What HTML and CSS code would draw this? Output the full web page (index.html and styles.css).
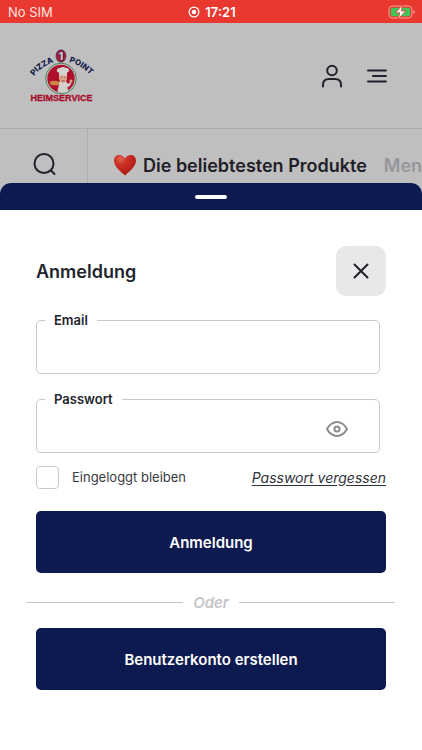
FILE: index.html
```html
<!DOCTYPE html>
<html lang="de">
<head>
<meta charset="utf-8">
<meta name="viewport" content="width=device-width, initial-scale=1">
<title>Pizza Point – Anmeldung</title>
<link rel="stylesheet" href="styles.css">
</head>
<body>
<div class="status">
  <span class="carrier">No SIM</span>
  <span class="clock">
    <svg width="12" height="12" viewBox="0 0 12 12" aria-hidden="true"><circle cx="6" cy="6" r="4.9" fill="none" stroke="#fff" stroke-width="1.2"/><circle cx="6" cy="6" r="2.3" fill="#fff"/></svg>
    17:21
  </span>
  <svg class="battery" width="28" height="16" viewBox="0 0 28 16" aria-hidden="true">
    <rect x="1" y="2" width="23" height="12" rx="3.5" fill="none" stroke="#f6a49d"/>
    <rect x="2.8" y="3.8" width="19.4" height="8.4" rx="1.8" fill="#3fc558"/>
    <path d="M25.5 6v4q1.4-.5 1.4-2t-1.4-2z" fill="#f6a49d"/>
    <path d="M14.5.8 7.6 8.8h4.2l-1.6 6.4 7.4-8.2h-4.3z" fill="#fff" stroke="#e8382f" stroke-width=".8"/>
  </svg>
</div>

<header class="top">
  <a class="logo" href="#" aria-label="Pizza Point Heimservice">
    <svg width="70" height="56" viewBox="0 0 70 56">
      <path id="arc-left" d="M7 28Q14 18 30 13" fill="none"/>
      <path id="arc-right" d="M42 14Q54 17 65 29" fill="none"/>
      <text class="logo-arc"><textPath href="#arc-left">PIZZA</textPath></text>
      <text class="logo-arc"><textPath href="#arc-right">POINT</textPath></text>
      <ellipse cx="34" cy="8" rx="5" ry="6.2" fill="#a51c37" stroke="#393550" stroke-width=".7"/>
      <text class="logo-one" x="34" y="12">1</text>
      <circle cx="34" cy="30.5" r="15.3" fill="#c7cbc5" stroke="#397752" stroke-width=".9"/>
      <circle cx="34" cy="30.5" r="13.7" fill="#ad0f2c"/>
      <path d="M30.500 43.500 32 36l-3 1.500-1-1.500 5-2.500h6l2.500 2.500 1.500-2 1.500 1-2.500 4-1.500-.5.5 5q-5 2-10.500 0z" fill="#d3d0ce"/>
      <path d="M32 27h8v4q-1 4-4 4t-4-4z" fill="#d8a78b"/>
      <path d="M32 28v-3.500q-3-.5-2-3 1-2 3-1.500 3-2 6 0 3-.5 3 2 0 2.500-2 2.500V28q-4-1.500-8 0z" fill="#d3d3d1"/>
      <path d="M34 29.500h1m2.500 0h1M34.500 32.500q1.500 1 3 0" stroke="#60342e" stroke-width=".7" fill="none"/>
      <ellipse cx="27.500" cy="35" rx="4.800" ry="2.300" fill="#cc8441"/>
      <circle cx="44" cy="33" r="1.600" fill="#d8a78b"/>
      <text class="logo-name" x="34.500" y="53">HEIMSERVICE</text>
    </svg>
  </a>
  <nav class="actions">
    <button type="button" aria-label="Konto">
      <svg width="24" height="26" viewBox="0 0 24 26" class="line"><circle cx="12" cy="7.500" r="4.800"/><path d="M3 23.500V22q0-6 6-6h6q6 0 6 6v1.500"/></svg>
    </button>
    <button type="button" aria-label="Menü">
      <svg width="24" height="26" viewBox="0 0 24 26" class="line"><path d="M3 7.500h18M8 13h13M3 18.500h18"/></svg>
    </button>
  </nav>
</header>

<div class="categories">
  <button class="search" type="button" aria-label="Suchen">
    <svg width="24" height="24" viewBox="0 0 24 24" class="line"><circle cx="12" cy="11.500" r="9.500"/><path d="m19 18.500 3.500 3.500"/></svg>
  </button>
  <nav class="tabs">
    <a class="tab current" href="#">
      <svg width="24" height="24" viewBox="0 0 24 24" aria-hidden="true">
        <defs><radialGradient id="heart" cx=".3" cy=".2" r=".9"><stop offset="0" stop-color="#e06550"/><stop offset=".3" stop-color="#cd3026"/><stop offset="1" stop-color="#a71712"/></radialGradient></defs>
        <path d="M12 22.500C8 18.500 1 14 1 7.500 1 1 9 0 12 5.500 15 0 23 1 23 7.500 23 14 16 18.500 12 22.500z" fill="url(#heart)"/>
      </svg>
      Die beliebtesten Produkte</a>
    <a class="tab" href="#">Men</a>
  </nav>
</div>

<main class="sheet">
  <div class="grip"><span></span></div>
  <form class="login">
    <div class="title-row">
      <h1>Anmeldung</h1>
      <button class="close" type="button" aria-label="Schließen">
        <svg width="18" height="18" viewBox="0 0 18 18" class="line"><path d="m2.500 2.500 13 13m0-13-13 13"/></svg>
      </button>
    </div>
    <fieldset class="field">
      <legend><label for="email">Email</label></legend>
      <input id="email" type="email">
    </fieldset>
    <fieldset class="field">
      <legend><label for="password">Passwort</label></legend>
      <input id="password" type="password">
      <button class="reveal" type="button" aria-label="Passwort anzeigen">
        <svg width="24" height="18" viewBox="0 0 24 18"><path d="M2 9Q6 2 12 2t10 7q-4 7-10 7T2 9z"/><circle cx="12" cy="9" r="2.600"/></svg>
      </button>
    </fieldset>
    <div class="options">
      <input id="stay" type="checkbox">
      <label for="stay">Eingeloggt bleiben</label>
      <a href="#">Passwort vergessen</a>
    </div>
    <button class="primary" type="submit">Anmeldung</button>
    <div class="divider">Oder</div>
    <button class="primary" type="button">Benutzerkonto erstellen</button>
  </form>
</main>
</body>
</html>
```
FILE: styles.css
```css
* { box-sizing: border-box; }

body {
  margin: 0;
  min-height: 100vh;
  display: flex;
  flex-direction: column;
  overflow-x: hidden;
  background: #bfbfbf;
  color: #23252d;
  font-family: Inter, "Liberation Sans", sans-serif;
}

button { border: 0; padding: 0; background: none; color: inherit; font: inherit; }
svg { display: block; flex: none; }
.line { fill: none; stroke: #20212a; stroke-width: 2; stroke-linecap: round; stroke-linejoin: round; }

.status {
  display: grid;
  grid-template-columns: 1fr auto 1fr;
  align-items: center;
  height: 23px;
  padding: 0 6px 0 8px;
  background: #e8382f;
  color: #fff;
  font-size: 13px;
}
.carrier { color: #ffe4e1; }
.clock { display: flex; align-items: center; gap: 5px; font-weight: 600; }
.battery { justify-self: end; }

.top {
  display: flex;
  align-items: center;
  justify-content: space-between;
  height: 106px;
  padding: 0 33px 0 27px;
  border-bottom: 1px solid #adadad;
}
.logo svg { overflow: visible; }
.logo-arc { fill: #15204b; font-size: 8px; font-weight: 800; }
.logo-one { fill: #d5ccd3; stroke: #15204b; stroke-width: 1px; paint-order: stroke; font-size: 10px; font-weight: 800; text-anchor: middle; }
.logo-name { fill: #a60c2b; stroke: #a60c2b; stroke-width: 0.3px; font-family: "Liberation Sans", sans-serif; font-size: 9px; font-weight: 700; text-anchor: middle; }
.actions { display: flex; gap: 21px; }

.categories { display: flex; height: 54px; }
.search {
  flex: none;
  display: flex;
  justify-content: center;
  width: 88px;
  padding-top: 23px;
  border-right: 1px solid #adadad;
}
.tabs {
  display: flex;
  flex: 1;
  gap: 17px;
  min-width: 0;
  padding: 24px 0 0 25px;
  overflow: hidden;
  white-space: nowrap;
}
.tab {
  display: flex;
  align-items: center;
  gap: 6px;
  height: 24px;
  color: #96969a;
  font-size: 18px;
  font-weight: 600;
  text-decoration: none;
}
.current { color: #1f2027; }

.sheet {
  flex: 1;
  border-radius: 11px 11px 0 0;
  overflow: hidden;
  background: #fff;
}
.grip { display: flex; justify-content: center; height: 27px; padding-top: 12px; background: #0d1a4f; }
.grip span { width: 32px; height: 4px; border-radius: 2px; background: #fff; }

.login { display: flex; flex-direction: column; padding: 36px 36px 60px; }
.title-row { display: flex; align-items: center; justify-content: space-between; margin-bottom: 16px; }
h1 { margin: 0; font-size: 18px; font-weight: 600; }
.close {
  display: grid;
  place-items: center;
  width: 50px;
  height: 50px;
  border-radius: 10px;
  background: #e8e8ea;
}

.field {
  display: flex;
  align-items: center;
  min-width: 0;
  height: 62px;
  margin: 0 6px 17px 0;
  padding: 0;
  border: 1px solid #c9c9c9;
  border-radius: 5px;
}
.field legend {
  margin-left: 8px;
  padding: 0 9px;
  font-size: 13px;
  font-weight: 600;
  line-height: 16px;
}
.field input {
  flex: 1;
  min-width: 0;
  height: 44px;
  padding: 0 18px;
  border: 0;
  outline: 0;
  background: none;
  font: inherit;
}
.reveal { margin: 0 30px 0 0; }
.reveal svg { fill: none; stroke: #8b8c90; stroke-width: 2; }

.options { display: flex; align-items: center; height: 24px; margin: -5px 0 22px; font-size: 14px; }
.options input {
  appearance: none;
  width: 23px;
  height: 23px;
  margin: 0 13px 0 0;
  border: 1px solid #c9c9c9;
  border-radius: 4px;
}
.options label { color: #3a3b42; font-size: 13px; }
.options a { margin-left: auto; color: #30323a; font-style: italic; text-underline-offset: 2px; }

.primary {
  height: 62px;
  border-radius: 5px;
  background: #0d1a4f;
  color: #fff;
  font-size: 15px;
  font-weight: 600;
}
.divider {
  display: flex;
  align-items: center;
  gap: 10px;
  height: 55px;
  margin: 0 -9px;
  color: #c4c5c9;
  padding-top: 4px;
  font-size: 15px;
  font-style: italic;
  font-weight: 600;
}
.divider::before, .divider::after { content: ""; flex: 1; height: 1px; background: #c4c5c9; }
```
